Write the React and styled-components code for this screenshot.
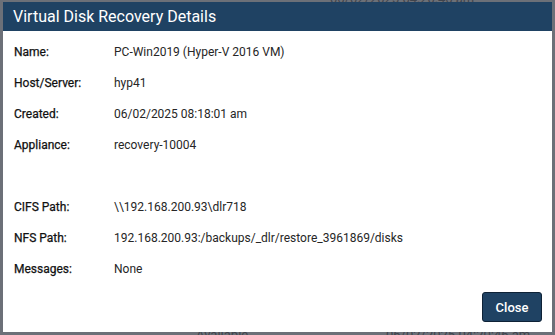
import styled, { createGlobalStyle } from 'styled-components';

const GlobalStyle = createGlobalStyle`
  html, body {
    margin: 0;
    padding: 0;
    width: 555px;
    height: 335px;
    overflow: hidden;
    background: #6c7078;
    font-family: Roboto, "Liberation Sans", Arial, sans-serif;
  }
`;

const Page = styled.div`
  position: relative;
  width: 555px;
  height: 335px;
  overflow: hidden;
`;

const BehindText = styled.div`
  position: absolute;
  left: ${p => p.x}px;
  top: ${p => p.y}px;
  font-size: 13px;
  color: #40444c;
  white-space: nowrap;
`;

const Overlay = styled.div`
  position: absolute;
  inset: 0;
  padding: 2px 3px 3px 3px;
  box-sizing: border-box;
`;

const ModalBox = styled.div`
  width: 549px;
  height: 330px;
  background: #ffffff;
  display: flex;
  flex-direction: column;
  box-sizing: border-box;
`;

const Header = styled.div`
  height: 29px;
  background: #1f4263;
  color: #ffffff;
  font-size: 16px;
  display: flex;
  align-items: center;
  padding-left: 10px;
  flex-shrink: 0;
`;

const Body = styled.div`
  padding: 5px 0 0 11px;
  display: grid;
  grid-template-columns: 100px 1fr;
  grid-auto-rows: 31px;
  align-items: center;
  font-size: 12px;
  color: #222222;
`;

const Label = styled.div`
  color: #111111;
  -webkit-text-stroke: 0.25px #111111;
`;

const Value = styled.div`
  color: #262626;
`;

const Spacer = styled.div`
  grid-column: 1 / span 2;
`;

const Footer = styled.div`
  margin-top: auto;
  display: flex;
  justify-content: flex-end;
  padding: 0 10px 10px 0;
`;

const CloseButton = styled.button`
  width: 60px;
  height: 30px;
  background: #1f4263;
  border: 1px solid #0e2236;
  border-radius: 3px;
  color: #ffffff;
  font-family: Roboto, "Liberation Sans", Arial, sans-serif;
  font-size: 13px;
  font-weight: 500;
  cursor: pointer;
`;

const rows = [
  ['Name:', 'PC-Win2019 (Hyper-V 2016 VM)'],
  ['Host/Server:', 'hyp41'],
  ['Created:', '06/02/2025 08:18:01 am'],
  ['Appliance:', 'recovery-10004'],
  null,
  ['CIFS Path:', '\\\\192.168.200.93\\dlr718'],
  ['NFS Path:', '192.168.200.93:/backups/_dlr/restore_3961869/disks'],
  ['Messages:', 'None'],
];

export default function App() {
  return (
    <Page>
      <GlobalStyle />
      <BehindText x={330} y={-9}>06/02/2025 04:20:46 am</BehindText>
      <BehindText x={196} y={327}>Available</BehindText>
      <BehindText x={386} y={327}>06/02/2025 04:20:46 am</BehindText>
      <Overlay>
        <ModalBox>
          <Header>Virtual Disk Recovery Details</Header>
          <Body>
            {rows.map((r, i) =>
              r ? (
                <>
                  <Label key={`l${i}`}>{r[0]}</Label>
                  <Value key={`v${i}`}>{r[1]}</Value>
                </>
              ) : (
                <Spacer key={`s${i}`} />
              )
            )}
          </Body>
          <Footer>
            <CloseButton>Close</CloseButton>
          </Footer>
        </ModalBox>
      </Overlay>
    </Page>
  );
}
